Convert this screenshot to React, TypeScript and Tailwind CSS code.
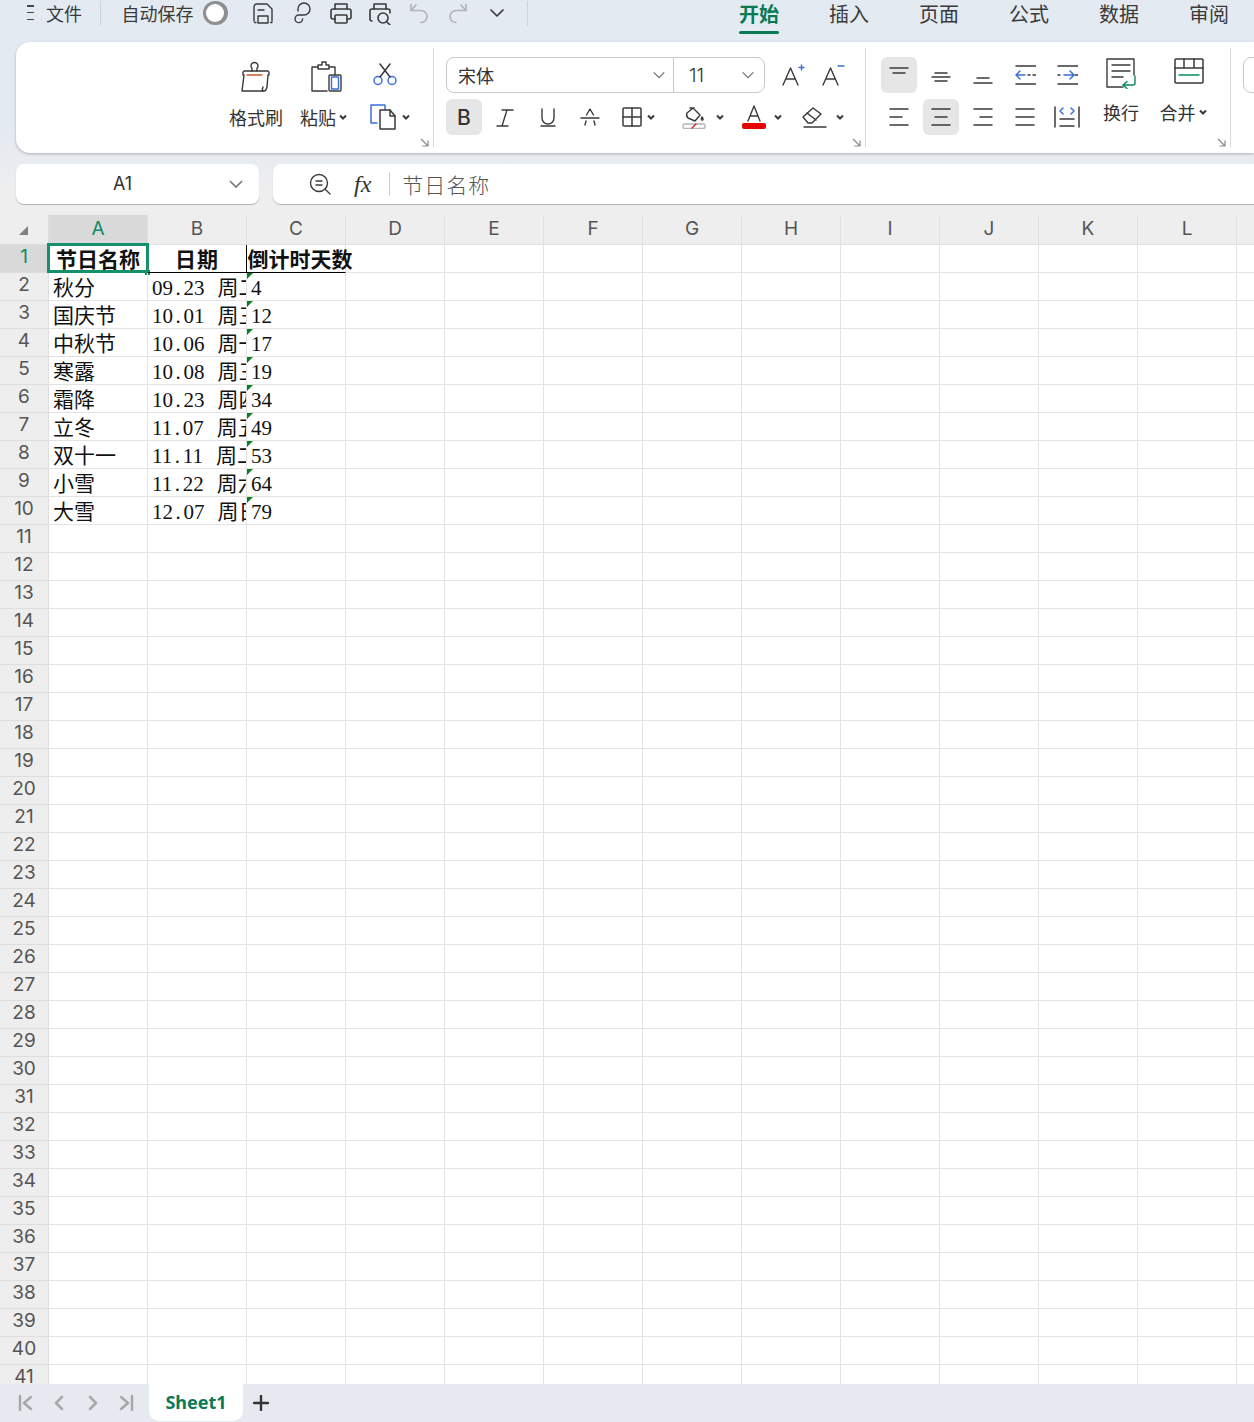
import type { ReactNode } from "react";

const COLS = ["A", "B", "C", "D", "E", "F", "G", "H", "I", "J", "K", "L", ""];
const ROWS = Array.from({ length: 41 }, (_, i) => i + 1);

const DATA: [string, string, string, string][] = [
  ["秋分", "09.23", "周二", "4"],
  ["国庆节", "10.01", "周三", "12"],
  ["中秋节", "10.06", "周一", "17"],
  ["寒露", "10.08", "周三", "19"],
  ["霜降", "10.23", "周四", "34"],
  ["立冬", "11.07", "周五", "49"],
  ["双十一", "11.11", "周二", "53"],
  ["小雪", "11.22", "周六", "64"],
  ["大雪", "12.07", "周日", "79"],
];

function Icon({ w, h, children, color = "#3a3a3a", sw = 1.4 }: { w: number; h: number; children: ReactNode; color?: string; sw?: number }) {
  return (
    <svg width={w} height={h} viewBox={`0 0 ${w} ${h}`} fill="none" stroke={color} strokeWidth={sw} strokeLinecap="round" strokeLinejoin="round" aria-hidden>
      {children}
    </svg>
  );
}

function Chevron({ size = 8, color = "#3a3a3a", sw = 2 }: { size?: number; color?: string; sw?: number }) {
  return (
    <svg width={size} height={size} viewBox="0 0 8 8" fill="none" stroke={color} strokeWidth={sw} aria-hidden>
      <path d="M1 2.5 4 5.5 7 2.5" />
    </svg>
  );
}

function Launcher() {
  return (
    <svg width="9" height="9" viewBox="0 0 9 9" fill="none" stroke="#8a8a8a" strokeWidth="1.2" aria-hidden>
      <path d="M1 1 8 8M8 2.5V8H2.5" />
    </svg>
  );
}

function TitleBar() {
  return (
    <div className="flex h-[41px] shrink-0 items-start overflow-hidden text-[18px] text-[#3a3a3a]">
      <div className="ml-[27px] mt-[5px] flex h-[15px] w-[12px] flex-col justify-between">
        <div className="h-[1.5px] bg-[#444]" />
        <div className="h-[1.5px] bg-[#444]" />
        <div className="h-[1.5px] bg-[#444]" />
      </div>
      <span className="ml-[12px] w-[36px] whitespace-nowrap leading-[26px]">文件</span>
      <div className="ml-[18px] mt-[1px] h-[25px] w-px bg-[#cfd3d8]" />
      <span className="ml-[21px] w-[72px] whitespace-nowrap leading-[26px]">自动保存</span>
      <div className="ml-[9px] mt-[1px] flex h-[24px] w-[42px] items-center rounded-full bg-[#8f8f8f] pl-[3px]">
        <div className="h-[18px] w-[18px] rounded-full bg-white" />
      </div>
      <div className="ml-[15px] mt-[1px] flex">
        <Slot>
          <Icon w={24} h={24}>
            <path d="M3 20V6a3 3 0 0 1 3-3h10l5 5v12" />
            <path d="M3.5 21.5H5M19.5 21.5H21" />
            <path d="M7 9h6" />
            <rect x="7" y="15" width="10" height="7" />
          </Icon>
        </Slot>
        <Slot>
          <Icon w={24} h={24}>
            <path d="M8 10V8a6 6 0 1 1 6 6H9a3.8 3.8 0 1 0 3.6 4" />
          </Icon>
        </Slot>
        <Slot>
          <Icon w={24} h={24} sw={1.6}>
            <path d="M6 8V3h12v5" />
            <path d="M6 18H4a2 2 0 0 1-2-2v-6a2 2 0 0 1 2-2h16a2 2 0 0 1 2 2v6a2 2 0 0 1-2 2h-2" />
            <rect x="6" y="14" width="12" height="8" rx="1" />
          </Icon>
        </Slot>
        <Slot>
          <Icon w={24} h={24} sw={1.6}>
            <path d="M6 8V3h12v5" />
            <path d="M4 20a2 2 0 0 1-2-2v-8a2 2 0 0 1 2-2h16a2 2 0 0 1 2 2v2" />
            <circle cx="15" cy="17" r="5" />
            <path d="m19 21 3 3" />
          </Icon>
        </Slot>
        <Slot>
          <Icon w={24} h={24} color="#b2b2b2" sw={1.6}>
            <path d="M9 4 4 9.5h10a6 6 0 0 1 0 12" />
            <path d="M4 9.5V3.5" />
          </Icon>
        </Slot>
        <Slot>
          <Icon w={24} h={24} color="#b2b2b2" sw={1.6}>
            <path d="M15 4l5 5.5H10a6 6 0 0 0 0 12" />
            <path d="M20 9.5V3.5" />
          </Icon>
        </Slot>
        <Slot>
          <Icon w={16} h={10} sw={1.7}>
            <path d="M2 2l6 6 6-6" />
          </Icon>
        </Slot>
      </div>
      <div className="ml-[11px] mt-[1px] h-[25px] w-px bg-[#cfd3d8]" />
      <div className="ml-[186px] flex text-[20px]">
        {["开始", "插入", "页面", "公式", "数据", "审阅"].map((t, i) => (
          <div key={t} className="flex w-[90px] shrink-0 flex-col items-center">
            <span className={`leading-[28px] ${i === 0 ? "font-bold text-[#0a7a55]" : "text-[#3a3a3a]"}`}>{t}</span>
            {i === 0 && <div className="mt-[3px] h-[3px] w-[40px] rounded-full bg-[#0a7a55]" />}
          </div>
        ))}
      </div>
    </div>
  );
}

function Slot({ children }: { children: ReactNode }) {
  return <div className="flex h-[24px] w-[39px] items-center justify-center">{children}</div>;
}

function Btn({ children, active, w = 42 }: { children: ReactNode; active?: boolean; w?: number }) {
  return (
    <div className="flex h-[36px] items-center justify-center" style={{ width: w }}>
      <div className={`flex h-[36px] w-[36px] items-center justify-center rounded-[6px] ${active ? "bg-[#e6e6e6]" : ""}`}>{children}</div>
    </div>
  );
}

function Lines({ a, b, c, x1 = 0 }: { a: number[]; b: number[]; c?: number[]; x1?: number }) {
  return (
    <Icon w={22} h={22} sw={1.5} color="#3a3a3a">
      <path d={`M${a[0] + x1} ${a[2]}H${a[1] + x1}`} />
      <path d={`M${b[0] + x1} ${b[2]}H${b[1] + x1}`} />
      {c && <path d={`M${c[0] + x1} ${c[2]}H${c[1] + x1}`} />}
    </Icon>
  );
}

function ClipboardGroup() {
  return (
    <div className="relative flex w-[417px] shrink-0 pl-[213px] pt-[19px] text-[18px] text-[#333]">
      <div className="flex w-[54px] flex-col items-center">
        <div className="flex h-[36px] items-start">
          <Icon w={30} h={32} sw={1.4}>
            <path d="M11 10V7a2 2 0 0 1-1-2 3.5 3.5 0 0 1 7 0 2 2 0 0 1-1 2v3" />
            <path d="M3 10a2 2 0 0 0-1 2v2h1l-2 16h22c2 0 2.5-2 3-4l1-12h1v-2a2 2 0 0 0-1-2z" />
            <path d="M6 14h15" stroke="#c8592a" />
            <path d="M22 30c-1-1-1-2 0-4" />
          </Icon>
        </div>
        <span className="mt-[7px] whitespace-nowrap leading-[26px]">格式刷</span>
      </div>
      <div className="ml-[17px] flex w-[56px] flex-col">
        <div className="ml-[11px] flex h-[36px] items-start">
          <Icon w={32} h={32} sw={1.4}>
            <path d="M7 6H1v24h15" />
            <path d="M24 14V6h-6" />
            <path d="M7 8V4h4V1h4v3h3v4z" />
            <rect x="18" y="14" width="12" height="16" rx="1" />
            <rect x="20.5" y="16" width="7" height="12" stroke="#3b6fd9" />
          </Icon>
        </div>
        <div className="mt-[7px] flex items-center gap-[3px]">
          <span className="whitespace-nowrap leading-[26px]">粘贴</span>
          <Chevron />
        </div>
      </div>
      <div className="ml-[14px] flex flex-col">
        <div className="ml-[2px] flex h-[36px] items-start pt-[2px]">
          <Icon w={26} h={24} color="#3b6fd9" sw={1.5}>
            <circle cx="6" cy="17.5" r="4" />
            <circle cx="20" cy="17.5" r="4" />
            <path d="M8 14 18 1M18 14 8 1" stroke="#3a3a3a" />
          </Icon>
        </div>
        <div className="mt-[7px] flex items-center gap-[6px]">
          <Icon w={26} h={26} sw={1.5}>
            <path d="M7 19H1V1h14v5" stroke="#3b6fd9" />
            <path d="M10 6h10l5 6v13H10z" />
            <path d="M20 6v6h5" />
          </Icon>
          <Chevron />
        </div>
      </div>
      <div className="absolute bottom-[6px] right-[4px]">
        <Launcher />
      </div>
    </div>
  );
}

function FontGroup() {
  return (
    <div className="relative w-[432px] shrink-0 border-l border-[#d9d9d9] pl-[12px] pt-[9px] [margin-block:6px] h-[99px]">
      <div className="flex items-center">
        <div className="flex h-[36px] w-[319px] rounded-[8px] border border-[#c9c9c9] text-[18px] text-[#333]">
          <div className="flex w-[227px] items-center justify-between border-r border-[#c9c9c9] pl-[11px] pr-[7px]">
            <span className="leading-none">宋体</span>
            <Chevron size={14} color="#777" sw={0.8} />
          </div>
          <div className="flex flex-1 items-center justify-between pl-[15px] pr-[9px]">
            <span className="font-['Inter',sans-serif] text-[19px] font-light leading-none">11</span>
            <Chevron size={14} color="#777" sw={0.8} />
          </div>
        </div>
        <div className="ml-[16px] flex w-[24px] justify-center">
          <Icon w={24} h={24} sw={1.4}>
            <path d="M2 22 9.5 5 17 22M5 16h9" />
            <path d="M18 4.5h5M20.5 2v5" stroke="#3b6fd9" />
          </Icon>
        </div>
        <div className="ml-[16px] flex w-[24px] justify-center">
          <Icon w={24} h={24} sw={1.4}>
            <path d="M2 22 9.5 5 17 22M5 16h9" />
            <path d="M17 3h6" stroke="#3b6fd9" />
          </Icon>
        </div>
      </div>
      <div className="mt-[6px] flex items-center">
        <Btn active w={36}>
          <span className="font-['Inter',sans-serif] text-[21px] font-medium leading-none text-[#333]">B</span>
        </Btn>
        <Btn w={46}>
          <Icon w={20} h={20}>
            <path d="M7 3h11M2 19h11M12 3 7 19" />
          </Icon>
        </Btn>
        <Btn w={40}>
          <Icon w={18} h={20}>
            <path d="M3 2v9a6 6 0 0 0 12 0V2M2 19h14" />
          </Icon>
        </Btn>
        <Btn w={44}>
          <Icon w={20} h={20}>
            <path d="M1 11h18M6.500 8 10 2l3.500 6M6 14l-1 4M14 14l1 4" />
          </Icon>
        </Btn>
        <div className="ml-[10px] flex w-[44px] items-center gap-[5px]">
          <Icon w={20} h={20} sw={1.5}>
            <rect x="1" y="1" width="18" height="18" rx="1" />
            <path d="M10 1v18M1 10h18" />
          </Icon>
          <Chevron />
        </div>
        <div className="ml-[16px] flex w-[44px] items-center gap-[10px]">
          <Icon w={24} h={24}>
            <path d="M5 8l6-5 7 7-5 6-7-3c-1-1-2-3-1-5zM8 3h4" />
            <path d="M20 12c1 1.500 1.500 2.500.5 3s-1.500-1.500-.5-3z" fill="#3a3a3a" />
            <rect x="1" y="19" width="22" height="4.500" rx="1.500" stroke="#b5b5b5" />
            <path d="M10 23l4-4" stroke="#e02020" />
          </Icon>
          <Chevron />
        </div>
        <div className="ml-[16px] flex w-[44px] items-center gap-[8px]">
          <div className="flex w-[24px] flex-col items-center">
            <Icon w={16} h={17} sw={1.4}>
              <path d="M2 16 8 1l6 15M4.500 11h7" />
            </Icon>
            <div className="mt-[1px] h-[6px] w-[24px] rounded-[2px] bg-[#e60000]" />
          </div>
          <Chevron />
        </div>
        <div className="ml-[15px] flex w-[44px] items-center gap-[9px]">
          <Icon w={26} h={24} sw={1.4}>
            <path d="M2 12 12 3l8 6-9 9H7z" />
            <path d="M6 8l9 7" />
            <path d="M3 22h22" />
          </Icon>
          <Chevron />
        </div>
      </div>
      <div className="absolute bottom-[0px] right-[4px]">
        <Launcher />
      </div>
    </div>
  );
}

function AlignGroup() {
  const arrowL = (
    <Icon w={22} h={22} sw={1.5}>
      <path d="M2 2h20M2 20h20M14 11h2M19 11h3" />
      <path d="M11 11H2M6 7l-4 4 4 4" stroke="#3b6fd9" />
    </Icon>
  );
  const arrowR = (
    <Icon w={22} h={22} sw={1.5}>
      <path d="M2 2h20M2 20h20M2 11h2M19 11h3" />
      <path d="M8 11h10M14 7l4 4-4 4" stroke="#3b6fd9" />
    </Icon>
  );
  return (
    <div className="relative h-[99px] w-[366px] shrink-0 border-l border-r border-[#d9d9d9] pl-[12px] pt-[9px] [margin-block:6px]">
      <div className="flex">
        <div className="flex flex-col gap-[6px]">
          <div className="flex">
            <Btn active>
              <Lines a={[2, 20, 4]} b={[5, 17, 9]} />
            </Btn>
            <Btn>
              <Lines a={[5, 17, 9]} b={[2, 20, 13]} c={[5, 17, 17]} />
            </Btn>
            <Btn>
              <Lines a={[5, 17, 14]} b={[2, 20, 19]} />
            </Btn>
            <Btn>{arrowL}</Btn>
            <Btn>{arrowR}</Btn>
          </div>
          <div className="flex">
            <Btn>
              <Lines a={[2, 20, 3]} b={[2, 14, 11]} c={[2, 20, 19]} />
            </Btn>
            <Btn active>
              <Lines a={[2, 20, 3]} b={[5, 17, 11]} c={[2, 20, 19]} />
            </Btn>
            <Btn>
              <Lines a={[2, 20, 3]} b={[8, 20, 11]} c={[2, 20, 19]} />
            </Btn>
            <Btn>
              <Lines a={[2, 20, 3]} b={[2, 20, 11]} c={[2, 20, 19]} />
            </Btn>
            <Btn>
              <Icon w={26} h={22} sw={1.5}>
                <path d="M1 1v20M25 1v20M6 13h14M6 20h14" />
                <path d="M9 2 6 5l3 3M17 2l3 3-3 3" stroke="#3b6fd9" />
              </Icon>
            </Btn>
          </div>
        </div>
        <div className="ml-[3px] flex w-[60px] flex-col items-center text-[18px] text-[#333]">
          <div className="flex h-[36px] items-start">
            <Icon w={32} h={32} sw={1.4}>
              <path d="M29 18V2H2v28h16" />
              <path d="M7 8h18M7 14h18M7 20h11" />
              <path d="M30 19v7a2 2 0 0 1-2 2h-9M22 24.500l-4 3.500 4 3.500" stroke="#0a8a5f" />
            </Icon>
          </div>
          <span className="mt-[6px] whitespace-nowrap leading-[26px]">换行</span>
        </div>
        <div className="ml-[5px] flex w-[65px] flex-col items-center text-[18px] text-[#333]">
          <div className="flex h-[36px] items-start">
            <Icon w={30} h={28} sw={1.5}>
              <rect x="1" y="2" width="28" height="24" rx="1" />
              <path d="M1 11h28M10 2v9M20 2v9" />
              <path d="M5 18h20" stroke="#0a8a5f" />
            </Icon>
          </div>
          <div className="ml-[-11px] mt-[6px] flex items-center gap-[3px]">
            <span className="whitespace-nowrap leading-[26px]">合并</span>
            <Chevron />
          </div>
        </div>
      </div>
      <div className="absolute bottom-[0px] right-[4px]">
        <Launcher />
      </div>
    </div>
  );
}

function Ribbon() {
  return (
    <div className="ml-[16px] flex h-[111px] shrink-0 overflow-hidden rounded-l-[14px] bg-white shadow-[0_1px_3px_rgba(0,0,0,0.25)]">
      <ClipboardGroup />
      <FontGroup />
      <AlignGroup />
      <div className="ml-[12px] mt-[15px] h-[36px] w-[40px] shrink-0 rounded-[8px] border border-[#c9c9c9]" />
    </div>
  );
}

function FormulaBar() {
  return (
    <div className="mt-[11px] flex h-[40px] shrink-0 pl-[16px]">
      <div className="flex w-[243px] items-center rounded-[8px] bg-white shadow-[0_1px_1px_rgba(0,0,0,0.25)]">
        <span className="ml-[97px] w-[22px] font-['Inter',sans-serif] text-[18px] leading-none text-[#333]">A1</span>
        <div className="ml-[93px]">
          <Chevron size={16} color="#777" sw={0.8} />
        </div>
      </div>
      <div className="ml-[14px] flex flex-1 items-center rounded-l-[8px] bg-white shadow-[0_1px_1px_rgba(0,0,0,0.25)]">
        <div className="ml-[35px] flex h-[24px] w-[24px] items-center justify-center">
          <Icon w={22} h={22} sw={1.4}>
            <circle cx="10" cy="10" r="8.500" />
            <path d="M7 8h6M7 12h6M16 16l5 5" />
          </Icon>
        </div>
        <span className="ml-[22px] font-['Liberation_Serif',serif] text-[24px] italic leading-none text-[#333]">fx</span>
        <div className="ml-[18px] h-[24px] w-px bg-[#d0d0d0]" />
        <span className="ml-[12px] font-['Noto_Sans_CJK_SC',sans-serif] text-[21px] font-light leading-none tracking-[1px] text-[#555]">节日名称</span>
      </div>
    </div>
  );
}

function DateText({ date, day }: { date: string; day: string }) {
  const [m, d] = date.split(".");
  return (
    <span className="whitespace-nowrap">
      {m}
      <span className="px-[2.6px]">.</span>
      {d}
      <span className="ml-[13px]">{day}</span>
    </span>
  );
}

function renderCell(rowIdx: number, colIdx: number) {
  const base = "relative h-[28px] border-b border-r border-[#e3e3e3] font-['Liberation_Serif','Noto_Sans_CJK_SC',serif] text-[21px] leading-[31px] text-[#111]";
  if (rowIdx === 0 && colIdx === 0) {
    return (
      <div className={`${base} flex justify-center font-bold`}>
        <span className="whitespace-nowrap">节日名称</span>
        <div className="absolute left-[-2px] top-[-2px] h-[30px] w-[102px] border-[3px] border-[#14906b]" />
        <div className="absolute right-[-3px] top-[25px] h-[5px] w-[5px] bg-[#14906b]" />
      </div>
    );
  }
  if (rowIdx === 0 && colIdx === 1) {
    return (
      <div className={`${base} flex justify-center border-b-black border-r-black font-bold tracking-[1px]`}>
        <span className="whitespace-nowrap">日期</span>
      </div>
    );
  }
  if (rowIdx === 0 && colIdx === 2) {
    return (
      <div className={`${base} flex justify-center border-b-black font-bold [clip-path:inset(0_-40px_0_0)]`}>
        <span className="ml-[8px] whitespace-nowrap">倒计时天数</span>
      </div>
    );
  }
  const row = DATA[rowIdx - 1];
  if (!row) return <div className={base} />;
  if (colIdx === 0) return <div className={`${base} pl-[4px]`}>{row[0]}</div>;
  if (colIdx === 1) {
    return (
      <div className={`${base} overflow-hidden pl-[4px]`}>
        <DateText date={row[1]} day={row[2]} />
      </div>
    );
  }
  if (colIdx === 2) {
    return (
      <div className={`${base} pl-[4px]`}>
        {row[3]}
        <div className="absolute left-0 top-0 h-0 w-0 border-r-[6px] border-t-[6px] border-r-transparent border-t-[#0a7d1f]" />
      </div>
    );
  }
  return <div className={base} />;
}

function Sheet() {
  return (
    <div className="min-h-0 flex-1 overflow-hidden bg-white">
      <div className="grid w-[1336px] grid-cols-[49px_repeat(13,99px)] font-['Inter',sans-serif]">
        <div className="flex h-[30px] items-center justify-center border-r border-b border-[#dcdcdc] bg-[#eeeeee]">
          <div className="ml-[-2px] mt-[2px] h-0 w-0 border-b-[9px] border-l-[9px] border-b-[#808080] border-l-transparent" />
        </div>
        {COLS.map((c, i) => (
          <div key={i} className={`flex h-[30px] items-center justify-center border-b border-r border-[#e0e0e0] text-[19px] ${i === 0 ? "bg-[#d9d9d9] text-[#0f8a65]" : "bg-[#eeeeee] text-[#555]"}`}>
            {c}
          </div>
        ))}
        {ROWS.map((r, ri) => (
          <RowCells key={r} r={r} ri={ri} />
        ))}
      </div>
    </div>
  );
}

function RowCells({ r, ri }: { r: number; ri: number }) {
  return (
    <>
      <div className={`flex h-[28px] items-center justify-center border-b border-r border-[#dedede] pb-[2px] text-[19px] ${ri === 0 ? "bg-[#d9d9d9] text-[#0f8a65]" : "bg-[#eeeeee] text-[#555]"}`}>{r}</div>
      {COLS.map((_, ci) => (
        <div key={ci}>{renderCell(ri, ci)}</div>
      ))}
    </>
  );
}

function TabBar() {
  return (
    <div className="flex h-[38px] shrink-0 items-start bg-[#e6eaf0]">
      <div className="ml-[18px] mt-[11px] flex w-[116px] items-center justify-between">
        <Icon w={16} h={16} color="#a8a8a8" sw={2.5}>
          <path d="M2 1v14M13 2 6 8l7 6" />
        </Icon>
        <Icon w={16} h={16} color="#a8a8a8" sw={2.5}>
          <path d="M11 2 5 8l6 6" />
        </Icon>
        <Icon w={16} h={16} color="#a8a8a8" sw={2.5}>
          <path d="M5 2l6 6-6 6" />
        </Icon>
        <Icon w={16} h={16} color="#a8a8a8" sw={2.5}>
          <path d="M14 1v14M3 2l7 6-7 6" />
        </Icon>
      </div>
      <div className="ml-[15px] flex h-[37px] w-[94px] items-center justify-center rounded-b-[10px] bg-white font-['Noto_Sans',sans-serif] text-[18px] font-bold text-[#0a7a55]">
        Sheet1
      </div>
      <div className="ml-[10px] mt-[11px]">
        <Icon w={16} h={16} color="#333" sw={2.4}>
          <path d="M8 1v14M1 8h14" />
        </Icon>
      </div>
    </div>
  );
}

export default function App() {
  return (
    <div className="flex h-[1422px] w-[1254px] flex-col overflow-hidden bg-white font-['Noto_Sans_CJK_SC',sans-serif]">
      <div className="flex h-[215px] shrink-0 flex-col overflow-hidden bg-gradient-to-b from-[#e4eaf1] from-60% to-[#eeeeee] to-90%">
        <TitleBar />
        <div className="mt-px">
          <Ribbon />
        </div>
        <FormulaBar />
      </div>
      <Sheet />
      <TabBar />
    </div>
  );
}
